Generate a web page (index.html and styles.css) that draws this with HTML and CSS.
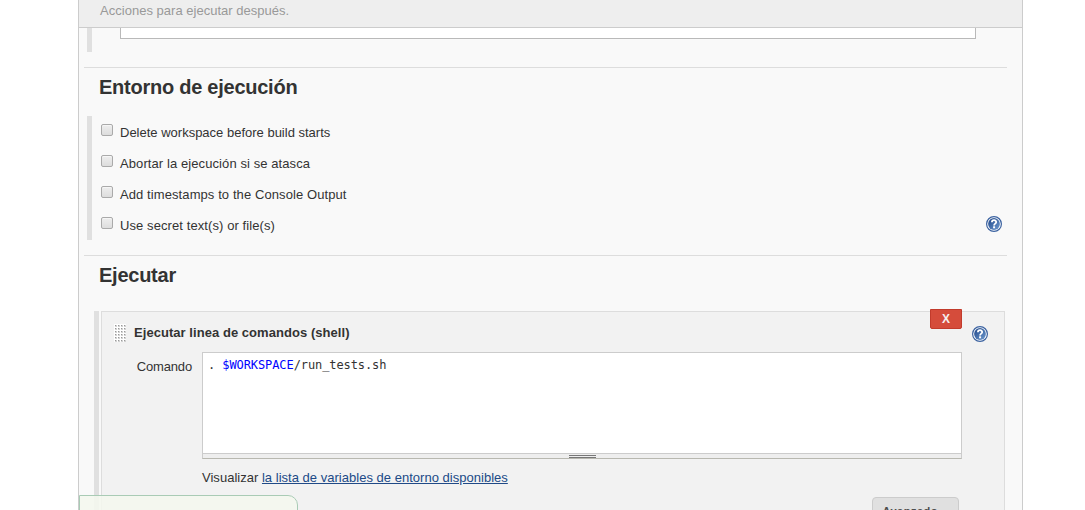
FILE: index.html
```html
<!DOCTYPE html>
<html lang="es">
<head>
<meta charset="utf-8">
<title>Configuración</title>
<link rel="stylesheet" href="styles.css">
</head>
<body>
<svg class="defs" width="0" height="0">
  <defs>
    <linearGradient id="ball" x1="0" y1="0" x2="1" y2="1">
      <stop offset="0" stop-color="#1f4688"/>
      <stop offset="1" stop-color="#6f9bd0"/>
    </linearGradient>
    <symbol id="help" viewBox="0 0 16 16">
      <circle cx="8" cy="8" r="7.4" fill="#fff" stroke="#3b62a0" stroke-width="1.2"/>
      <circle cx="8" cy="8" r="5.9" fill="url(#ball)"/>
      <path d="M5.9 6.2C5.9 3.6 10.2 3.6 10.2 6C10.2 7.6 8.1 7.6 8.1 9.4" fill="none" stroke="#fff" stroke-width="1.8"/>
      <rect x="7.1" y="10.3" width="2" height="2" fill="#fff"/>
    </symbol>
  </defs>
</svg>
<main class="panel">
  <header class="tabs">Acciones para ejecutar después.</header>
  <div class="previous"><div class="previous-bar"></div><div class="previous-input"></div></div>
  <section class="section environment">
    <h2>Entorno de ejecución</h2>
    <div class="options">
      <label class="option tight"><input type="checkbox"><span>Delete workspace before build starts</span></label>
      <label class="option"><input type="checkbox"><span>Abortar la ejecución si se atasca</span></label>
      <label class="option"><input type="checkbox"><span>Add timestamps to the Console Output</span></label>
      <label class="option"><input type="checkbox"><span>Use secret text(s) or file(s)</span><svg class="help"><use href="#help"/></svg></label>
    </div>
  </section>
  <section class="section">
    <h2>Ejecutar</h2>
    <div class="builders">
      <div class="builder">
        <button class="delete">X</button>
        <div class="builder-head">
          <svg class="grip" width="12" height="18">
            <defs>
              <pattern id="dots" width="3" height="3" patternUnits="userSpaceOnUse">
                <rect width="3" height="3" fill="#fff"/>
                <rect x="1" y="1" width="2" height="2" fill="#d2d2d2"/>
                <rect x="1" y="1" width="1" height="1" fill="#999"/>
              </pattern>
            </defs>
            <rect width="12" height="18" fill="url(#dots)"/>
          </svg>
          <b>Ejecutar linea de comandos (shell)</b>
          <svg class="help"><use href="#help"/></svg>
        </div>
        <div class="command">
          <span class="command-label">Comando</span>
          <div class="editor">
            <pre class="code">. <span class="variable">$WORKSPACE</span>/run_tests.sh</pre>
            <div class="resize"><i></i></div>
          </div>
        </div>
        <p class="hint">Visualizar <a href="#">la lista de variables de entorno disponibles</a></p>
        <button class="advanced">Avanzado...</button>
      </div>
    </div>
  </section>
</main>
<div class="save-bar"></div>
</body>
</html>
```
FILE: styles.css
```css
* { box-sizing: border-box; }
body {
  margin: 0;
  height: 510px;
  overflow: hidden;
  background: #fff;
  color: #333;
  font: 13px/18px "Liberation Sans", Arial, sans-serif;
}
.defs { position: absolute; }
.panel {
  width: 945px;
  height: 510px;
  margin-left: 78px;
  overflow: hidden;
  border: solid #ccc;
  border-width: 0 1px;
  background: #f9f9f9;
}
.tabs {
  height: 28px;
  padding: 2px 0 0 21px;
  border-bottom: 1px solid #ccc;
  background: #eee;
  color: #999;
  letter-spacing: .02px;
}
.previous { display: flex; align-items: flex-start; height: 39px; padding-left: 8px; }
.previous-bar { width: 5px; height: 24px; background: #e0e0e0; }
.previous-input {
  width: 856px;
  height: 11px;
  margin-left: 28px;
  border: 1px solid #b9b9b9;
  border-top: 0;
  background: #fff;
}
.section { width: 923px; margin-left: 5px; border-top: 1px solid #ddd; }
.environment { height: 188px; }
h2 {
  margin: 0;
  padding: 7px 0 17px 15px;
  font-size: 20px;
  line-height: 24px;
  letter-spacing: -.25px;
}
.options { margin-left: 3px; border-left: 5px solid #e0e0e0; }
.option { display: flex; align-items: flex-start; height: 31px; padding: 8px 5px 0 9px; }
.option span { flex: 1; letter-spacing: .09px; }
.option.tight span { letter-spacing: 0; }
.option .help { margin-top: -1px; }
.option input {
  appearance: none;
  width: 12px;
  height: 12px;
  margin: 0 7px 0 0;
  border: 1px solid #aaa;
  border-radius: 2px;
  background: linear-gradient(#eee, #ddd);
  box-shadow: inset 0 1px #f6f6f6;
}
.help { width: 16px; height: 16px; }
.builders {
  width: 911px;
  height: 220px;
  margin: 7px 0 0 10px;
  padding-left: 2px;
  border-left: 5px solid #e0e0e0;
}
.builder {
  position: relative;
  height: 220px;
  border: 1px solid #ddd;
  background: #f2f2f2;
}
.delete {
  position: absolute;
  top: -3px;
  right: 42px;
  width: 32px;
  height: 20px;
  padding: 0;
  border: 1px solid #c23b2c;
  border-radius: 0 0 2px 2px;
  background: #d54c3b;
  color: #f5eeee;
  font: bold 12px/18px "Liberation Sans", Arial, sans-serif;
}
.builder-head { display: flex; align-items: flex-start; height: 40px; padding: 12px 16px 0 12px; }
.builder-head b { flex: 1; margin: 0 0 0 8px; letter-spacing: .05px; }
.builder-head .help { margin-top: 2px; }
.command { display: flex; }
.command-label { width: 100px; padding: 6px 10px 0 0; text-align: right; letter-spacing: -.15px; }
.editor {
  width: 760px;
  height: 107px;
  border: 1px solid #ccc;
  border-bottom-color: #b8b8b0;
  background: #fff;
}
.code {
  height: 100px;
  margin: 0;
  padding: 4px 5px;
  font: 12px/17px "DejaVu Sans Mono", monospace;
  letter-spacing: -.09px;
}
.variable { color: #00f; }
.resize { height: 5px; padding-top: 1px; border-top: 1px solid #ccc; background: #eee; }
.resize i { display: block; width: 27px; height: 3px; margin: 0 auto; border: solid #777; border-width: 1px 0; }
.hint { margin: 10px 0 0 100px; letter-spacing: .02px; }
a { color: #204a87; }
.advanced {
  display: block;
  width: 87px;
  height: 28px;
  margin: 10px 0 0 770px;
  padding: 0;
  border: 1px solid #ccc;
  border-radius: 4px;
  background: #e0e0e0;
  color: #4d4d4d;
  font: bold 11px/24px "Liberation Sans", Arial, sans-serif;
  letter-spacing: .5px;
}
.save-bar {
  position: fixed;
  top: 495px;
  left: 79px;
  width: 219px;
  height: 40px;
  border: 1px solid #a9cbb5;
  border-radius: 0 10px 0 0;
  background: rgba(244, 248, 239, .85);
}
```
